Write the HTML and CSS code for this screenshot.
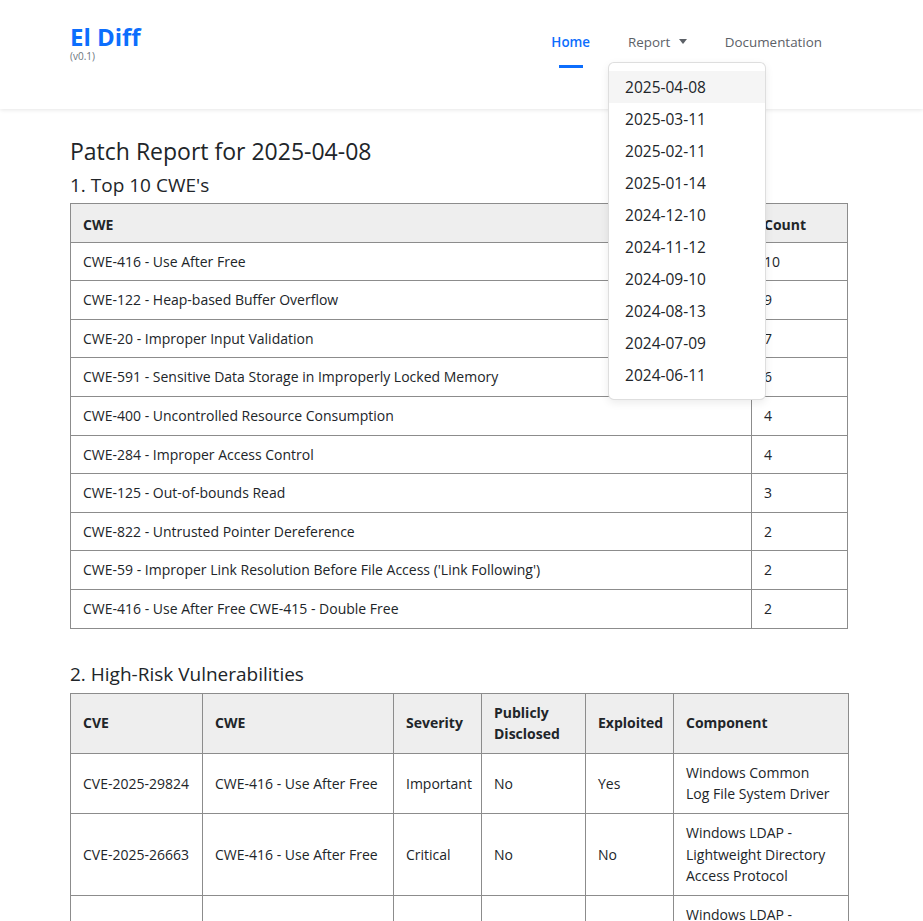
FILE: index.html
```html
<!DOCTYPE html>
<html lang="en">
<head>
<meta charset="utf-8">
<title>El Diff</title>
<link rel="stylesheet" href="styles.css">
</head>
<body>
<header class="navbar">
  <div class="nav-inner">
    <div class="brand">
      <a class="brand-name" href="#">El Diff</a>
      <div class="brand-version">(v0.1)</div>
    </div>
    <ul class="nav">
      <li class="nav-item"><a class="nav-link active" href="#">Home</a></li>
      <li class="nav-item dropdown">
        <a class="nav-link" href="#">Report <span class="caret"></span></a>
        <ul class="dropdown-menu">
          <li><a class="dropdown-item hover" href="#">2025-04-08</a></li>
          <li><a class="dropdown-item" href="#">2025-03-11</a></li>
          <li><a class="dropdown-item" href="#">2025-02-11</a></li>
          <li><a class="dropdown-item" href="#">2025-01-14</a></li>
          <li><a class="dropdown-item" href="#">2024-12-10</a></li>
          <li><a class="dropdown-item" href="#">2024-11-12</a></li>
          <li><a class="dropdown-item" href="#">2024-09-10</a></li>
          <li><a class="dropdown-item" href="#">2024-08-13</a></li>
          <li><a class="dropdown-item" href="#">2024-07-09</a></li>
          <li><a class="dropdown-item" href="#">2024-06-11</a></li>
        </ul>
      </li>
      <li class="nav-item"><a class="nav-link" href="#">Documentation</a></li>
    </ul>
  </div>
</header>
<main class="content">
  <h1 class="title">Patch Report for 2025-04-08</h1>
  <h2 class="section">1. Top 10 CWE's</h2>
  <table class="tbl">
    <thead>
      <tr><th>CWE</th><th class="count">Count</th></tr>
    </thead>
    <tbody>
      <tr><td>CWE-416 - Use After Free</td><td>10</td></tr>
      <tr><td>CWE-122 - Heap-based Buffer Overflow</td><td>9</td></tr>
      <tr><td>CWE-20 - Improper Input Validation</td><td>7</td></tr>
      <tr><td>CWE-591 - Sensitive Data Storage in Improperly Locked Memory</td><td>6</td></tr>
      <tr><td>CWE-400 - Uncontrolled Resource Consumption</td><td>4</td></tr>
      <tr><td>CWE-284 - Improper Access Control</td><td>4</td></tr>
      <tr><td>CWE-125 - Out-of-bounds Read</td><td>3</td></tr>
      <tr><td>CWE-822 - Untrusted Pointer Dereference</td><td>2</td></tr>
      <tr><td>CWE-59 - Improper Link Resolution Before File Access ('Link Following')</td><td>2</td></tr>
      <tr><td>CWE-416 - Use After Free CWE-415 - Double Free</td><td>2</td></tr>
    </tbody>
  </table>

  <h2 class="section section-2">2. High-Risk Vulnerabilities</h2>
  <table class="tbl tbl-fixed">
    <colgroup>
      <col class="c-cve"><col class="c-cwe"><col class="c-sev"><col class="c-pub"><col class="c-exp"><col class="c-comp">
    </colgroup>
    <thead>
      <tr><th>CVE</th><th>CWE</th><th>Severity</th><th>Publicly Disclosed</th><th>Exploited</th><th>Component</th></tr>
    </thead>
    <tbody>
      <tr><td>CVE-2025-29824</td><td>CWE-416 - Use After Free</td><td>Important</td><td>No</td><td>Yes</td><td>Windows Common Log File System Driver</td></tr>
      <tr><td>CVE-2025-26663</td><td>CWE-416 - Use After Free</td><td>Critical</td><td>No</td><td>No</td><td>Windows LDAP - Lightweight Directory Access Protocol</td></tr>
      <tr><td>CVE-2025-26670</td><td>CWE-416 - Use After Free</td><td>Critical</td><td>No</td><td>No</td><td>Windows LDAP - Lightweight Directory Access Protocol</td></tr>
    </tbody>
  </table>
</main>
</body>
</html>
```

FILE: styles.css
```css
* { box-sizing: border-box; }

body {
  margin: 0;
  font-family: "Open Sans", "Noto Sans", sans-serif;
  color: #212529;
  background: #fff;
}

a { text-decoration: none; }

.navbar {
  height: 109px;
  background: #fff;
  box-shadow: 0 1px 4px rgba(0, 0, 0, 0.1);
  position: relative;
  z-index: 5;
}

.nav-inner {
  margin-left: 70px;
  width: 778px;
  display: flex;
  justify-content: space-between;
  align-items: flex-start;
  padding-top: 22px;
}

.brand {
  display: flex;
  flex-direction: column;
  align-items: flex-start;
}

.brand-name {
  display: block;
  color: #0d6efd;
  font-size: 24px;
  font-weight: 700;
  line-height: 28px;
  padding-top: 1px;
}

.brand-version {
  color: #6c757d;
  font-size: 10px;
  line-height: 10px;
}

.nav {
  list-style: none;
  margin: 0 7px 0 0;
  padding: 0;
  display: flex;
}

.nav-item {
  position: relative;
  height: 40px;
}

.nav-link {
  display: block;
  position: relative;
  padding: 0 19px;
  line-height: 40px;
  font-size: 13.4px;
  color: #5c6167;
}

.nav-link.active {
  color: #0d6efd;
  font-weight: 600;
}

.nav-link.active::after {
  content: "";
  position: absolute;
  left: 50%;
  top: 43px;
  width: 24px;
  margin-left: -12px;
  height: 3px;
  background: #0d6efd;
}

.caret {
  display: inline-block;
  width: 0;
  height: 0;
  margin-left: 5px;
  vertical-align: 3px;
  border-top: 5px solid #5c6167;
  border-left: 4px solid transparent;
  border-right: 4px solid transparent;
}

.dropdown-menu {
  position: absolute;
  top: 40px;
  left: -1px;
  width: 158px;
  list-style: none;
  margin: 0;
  padding: 8px 0;
  background: #fff;
  border: 1px solid rgba(0, 0, 0, 0.13);
  border-radius: 6px;
  box-shadow: 0 3px 8px rgba(0, 0, 0, 0.08);
}

.dropdown-item {
  display: block;
  padding: 4px 16px;
  font-size: 15.5px;
  line-height: 24px;
  color: #212529;
}

.dropdown-item.hover {
  background: #f5f5f5;
}

.content {
  margin-left: 70px;
  width: 778px;
  padding-top: 27px;
  padding-bottom: 40px;
}

.title {
  margin: 0;
  font-size: 23px;
  font-weight: 400;
  line-height: 30px;
}

.section {
  margin: 6px 0 0;
  font-size: 19px;
  font-weight: 400;
  line-height: 26px;
}

.section-2 {
  margin-top: 32px;
}

.tbl {
  width: 100%;
  border-collapse: collapse;
  margin-top: 5px;
  font-size: 14px;
  line-height: 21.6px;
}

.section-2 + .tbl {
  margin-top: 6px;
}

.tbl th,
.tbl td {
  border: 1px solid #8c8c8c;
  padding: 8px 12px;
  text-align: left;
  vertical-align: middle;
}

.tbl th {
  background: #eeeeee;
  font-weight: 700;
  padding-top: 10px;
  padding-bottom: 6px;
}

.tbl .count { width: 96px; }

.tbl-fixed { table-layout: fixed; }
.tbl-fixed th { padding-top: 8px; padding-bottom: 8px; }
.c-cve { width: 132px; }
.c-cwe { width: 191px; }
.c-sev { width: 88px; }
.c-pub { width: 104px; }
.c-exp { width: 88px; }
.c-comp { width: 175px; }
```
